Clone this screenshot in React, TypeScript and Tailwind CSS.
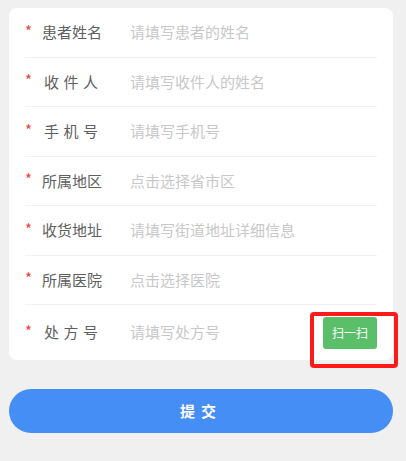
import React from "react";

const rows: { label: string; spaced?: boolean; ph: string }[] = [
  { label: "患者姓名", ph: "请填写患者的姓名" },
  { label: "收件人", spaced: true, ph: "请填写收件人的姓名" },
  { label: "手机号", spaced: true, ph: "请填写手机号" },
  { label: "所属地区", ph: "点击选择省市区" },
  { label: "收货地址", ph: "请填写街道地址详细信息" },
  { label: "所属医院", ph: "点击选择医院" },
  { label: "处方号", spaced: true, ph: "请填写处方号" },
];

export default function App() {
  return (
    <div
      className="w-[406px] h-[461px] bg-[#f0f0f0] pt-[8px]"
      style={{ fontFamily: '"Noto Sans CJK SC", "Noto Sans", sans-serif' }}
    >
      <div className="relative ml-[9px] w-[384px] bg-white rounded-[8px] px-[16px]">
        {rows.map((r, i) => {
          const last = i === rows.length - 1;
          return (
            <div
              key={i}
              className={`flex items-center ${last ? "h-[55px]" : "h-[49.5px] border-b border-[#f2f2f2]"}`}
            >
              <span className="text-[#e8443a] text-[15px] w-[17px] leading-none relative top-[-2px]">*</span>
              <span
                className={`w-[88px] text-[15px] text-[#606060] ${r.spaced ? "tracking-[4.5px] pl-[2px]" : ""}`}
              >
                {r.label}
              </span>
              <span className="flex-1 text-[15px] text-[#c8c8c8]">{r.ph}</span>
              {last && (
                <div className="w-[54px] h-[32px] bg-[#5bbf6a] rounded-[3px] flex items-center justify-center text-white text-[12px]">
                  扫一扫
                </div>
              )}
            </div>
          );
        })}
        <div className="absolute left-[301px] top-[304px] w-[88px] h-[56px] border-[4px] border-[#ff1a1a] rounded-[4px]" />
      </div>
      <div className="mt-[29px] ml-[9px] w-[384px] h-[44px] rounded-full bg-[#448ef5] flex items-center justify-center text-white text-[15px] font-bold tracking-[6px]">
        提交
      </div>
    </div>
  );
}
